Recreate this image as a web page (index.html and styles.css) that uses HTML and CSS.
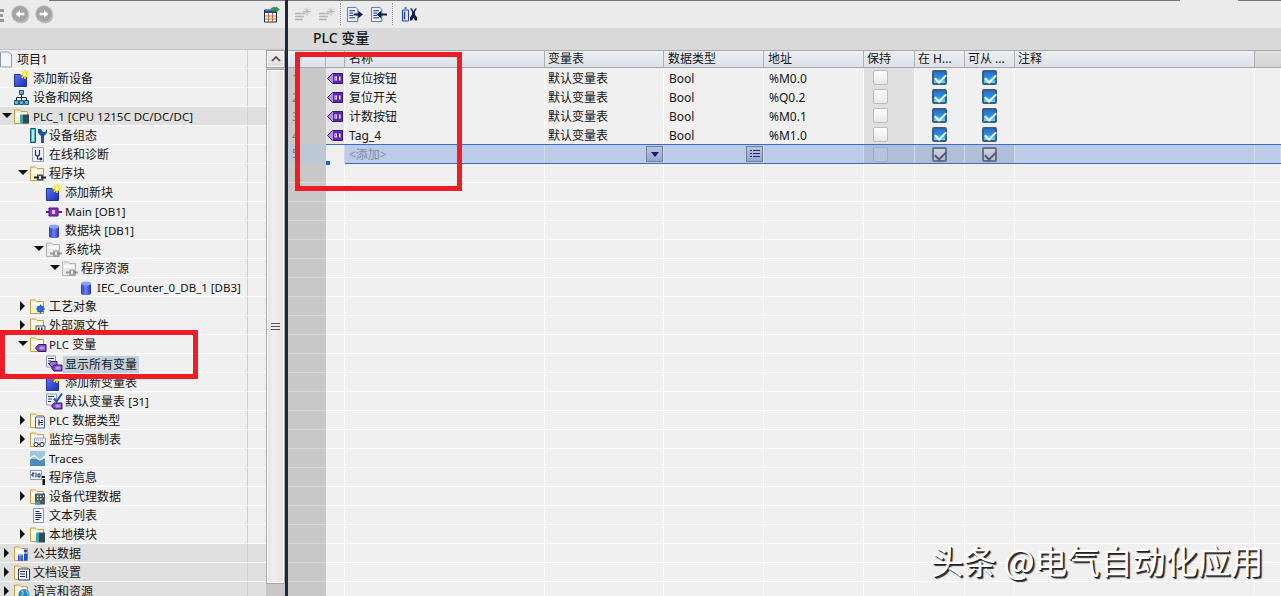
FILE: index.html
```html
<!DOCTYPE html>
<html lang="zh-CN">
<head>
    <meta charset="UTF-8">
    <title>PLC 变量</title>
    <link rel="stylesheet" href="styles.css">
</head>
<body>

<!-- Shared icon parts -->
<svg class="icon-defs" aria-hidden="true">
    <defs>
        <linearGradient id="blue-grad" x1="0" y1="0" x2="1" y2="1">
            <stop offset="0" stop-color="#5a78f0"/>
            <stop offset="1" stop-color="#1c2ab8"/>
        </linearGradient>
        <linearGradient id="db-grad" x1="0" y1="0" x2="1" y2="0">
            <stop offset="0" stop-color="#2a3cc8"/>
            <stop offset="0.5" stop-color="#6a84f4"/>
            <stop offset="1" stop-color="#2430b0"/>
        </linearGradient>
        <g id="folder">
            <path d="M.5 1.500h5l1.500 1.500h6.500v12H.5z" fill="#fdf1c8" stroke="#c6a04c"/>
            <path d="M2 4.500h10v3H2z" fill="#fff"/>
        </g>
        <g id="folder-gray">
            <path d="M.5 1.500h5l1.500 1.500h6.500v12H.5z" fill="#e8e8e8" stroke="#b4b4b4"/>
            <path d="M2 4.500h10v3H2z" fill="#f8f8f8"/>
        </g>
        <g id="add">
            <path d="M.5 4.500h12v12H.5z" fill="url(#blue-grad)" stroke="#2030b0"/>
            <path d="M11 0v9M6.500 4.500h9M7.800 1.300l6.400 6.400M14.200 1.300L7.800 7.700" stroke="#f8ec10" stroke-width="1.500"/>
            <circle cx="11" cy="4.500" r="1.500" fill="#fffbd0"/>
        </g>
        <g id="net">
            <path d="M5.500 1.500h4v4h-4zM.5 11.500h4v4h-4zM5.500 11.500h4v4h-4zM10.500 11.500h4v4h-4z" fill="#5ab4d8" stroke="#205a80"/>
            <path d="M7.500 5.500v6M2.500 11.500v-3h10v3" fill="none" stroke="#1c2a40"/>
        </g>
        <g id="ov-plc">
            <path d="M6 6h3v9H6z" fill="#35a6b4"/>
            <path d="M9 6h6v9H9z" fill="#3a4854"/>
        </g>
        <g id="config">
            <path d="M.5 1.500h5v14h-5z" fill="#3fc0cc" stroke="#1c5a78"/>
            <path d="M2 3h2v11H2z" fill="#b6f0f0"/>
            <path d="M8 2v4l3 3v7h3V9l3-3V2l-2 3h-2l-2-3z" fill="#1c54a8"/>
        </g>
        <g id="diag">
            <path d="M2.500 1.500h11v14h-11z" fill="#f4f6ff" stroke="#98a4d0"/>
            <path d="M5.500 4v4a2 2 0 0 0 4 0V4M7.500 10v3h3" fill="none" stroke="#1c2a60" stroke-width="1.200"/>
            <circle cx="11" cy="13" r="1.400" fill="#1c2a60"/>
        </g>
        <g id="ov-block">
            <path d="M7 9h6v6H7z" fill="#4a525a"/>
            <path d="M4 11h12v2H4z" fill="#20262c"/>
            <path d="M9 10.500h2v3H9z" fill="#e8e8e8"/>
        </g>
        <g id="ob">
            <path d="M3 5h9v8H3z" fill="#8a2cc8" stroke="#4a1080"/>
            <path d="M0 8h3v2H0zM12 8h4v2h-4z" fill="#5a1c98"/>
            <path d="M6 7h3v4H6z" fill="#e8c8f8"/>
        </g>
        <g id="db">
            <path d="M3 4.500v10c0 2 10 2 10 0v-10z" fill="url(#db-grad)"/>
            <ellipse cx="8" cy="4.500" rx="5" ry="2" fill="#8ca4f8"/>
        </g>
        <g id="ov-gear">
            <circle cx="10.500" cy="10.500" r="2.500" fill="none" stroke="#2060c8" stroke-width="2"/>
            <path d="M10.500 6v9M6 10.500h9M7.300 7.300l6.400 6.400M13.700 7.300l-6.400 6.400" stroke="#2060c8"/>
        </g>
        <g id="ov-ext">
            <path d="M6 8.500h9v6H6z" fill="#eef0f8" stroke="#444c60"/>
            <path d="M8 10h1.500v3H8zM11 10h1.500v3H11z" fill="#1c2a50"/>
        </g>
        <g id="ov-tag">
            <path d="M5.500 11.500l3-3.500h7.500v7H8.500z" fill="#7a48c4" stroke="#3c1478"/>
            <path d="M9.500 10h5v3h-5z" fill="#b898e8"/>
        </g>
        <g id="vars">
            <path d="M.5 .5h9v11h-9z" fill="#f4f6ff" stroke="#8a98c8"/>
            <path d="M2 3h6M2 5.500h3M2 8h2" stroke="#2a3a70"/>
            <path d="M3 8.500l2-2.500h6v5H5z" fill="#9a78d8" stroke="#3c1478"/>
            <path d="M5.500 12.500l2.500-3h8v6H8z" fill="#7a48c4" stroke="#3c1478"/>
            <path d="M9.500 11h5v3h-5z" fill="#b898e8"/>
        </g>
        <g id="vartable">
            <path d="M.5 .5h10v11H.5z" fill="#f4f6ff" stroke="#8a98c8"/>
            <path d="M2 3h6M2 5.500h4M2 8h3" stroke="#2a3a70"/>
            <path d="M8 5l2.500 3L16 0" fill="none" stroke="#2050c0" stroke-width="2"/>
            <path d="M5.500 12.500l2.500-3h8v6H8z" fill="#7a48c4" stroke="#3c1478"/>
            <path d="M9.500 11h5v3h-5z" fill="#b898e8"/>
        </g>
        <g id="ov-datatype">
            <path d="M5.500 4.500h9v11h-9z" fill="#f4f6ff" stroke="#4a5ca8"/>
            <path d="M9 7v6M9 10h2M11 8h2M11 10h2M11 12h2" stroke="#1c2a70" stroke-width="1.200"/>
        </g>
        <g id="ov-watch">
            <path d="M4.500 6.500h11v5h-11z" fill="#f4f6ff" stroke="#8a98c8"/>
            <path d="M6 8.500h8" stroke="#6a7ab0" stroke-dasharray="1 1"/>
            <circle cx="6" cy="13" r="2" fill="#fff" stroke="#1c2a50"/>
            <circle cx="12" cy="13" r="2" fill="#fff" stroke="#1c2a50"/>
            <path d="M8 13h2" stroke="#1c2a50"/>
        </g>
        <g id="traces">
            <path d="M0 1h15v15H0z" fill="#4a8cc0"/>
            <path d="M0 1h15v8H0z" fill="#9cc8e4"/>
            <path d="M0 9c3-4 5-4 7-1s5 2 8-2" fill="none" stroke="#fff" stroke-width="1.300"/>
        </g>
        <g id="info">
            <path d="M.5 1.500h11v9h-11z" fill="#f4f6ff" stroke="#8a98c8"/>
            <path d="M2 4h2v1H2v2h2M6 3.500v5M8 5h2v3H8z" fill="none" stroke="#1c2a70"/>
            <path d="M12 7h3v2h-3zM12.500 10H15v6h-2.500z" fill="#111"/>
        </g>
        <g id="ov-proxy">
            <path d="M5 5h10v11H5z" fill="#4a5864"/>
            <path d="M7 7h1.500v1.500H7zM10 7h1.500v1.500H10zM13 7h1v1.500h-1zM7 10h1.500v1.500H7zM10 10h1.500v1.500H10z" fill="#e8e8e8"/>
            <path d="M5 13h5v3H5z" fill="#35a6b4"/>
        </g>
        <g id="textlist">
            <path d="M3.500 1.500h10v14h-10z" fill="#f4f6ff" stroke="#8a98c8"/>
            <path d="M5.500 4.500h4M5.500 6.500h6M5.500 8.500h6M5.500 10.500h6M5.500 12.500h4" stroke="#1c2a70"/>
        </g>
        <g id="ov-local">
            <path d="M6 6h3v10H6z" fill="#35a6b4"/>
            <path d="M9 6h6v10H9z" fill="#3a4854"/>
        </g>
        <g id="ov-common">
            <path d="M4 9.500v5c0 1.500 5 1.500 5 0v-5z" fill="url(#db-grad)"/>
            <ellipse cx="6.500" cy="9.500" rx="2.500" ry="1" fill="#8ca4f8"/>
            <circle cx="11.500" cy="5.500" r="1.800" fill="#1c54a8"/>
            <path d="M10 8h3.500v7H10z" fill="#1c54a8"/>
        </g>
        <g id="ov-docset">
            <path d="M4.500 4.500h11v11h-11z" fill="#f4f6ff" stroke="#2a3a60"/>
            <path d="M6 7h5M6 9.500h5M6 12h5M12.500 6.500v7" stroke="#1c2a50"/>
        </g>
        <g id="ov-globe">
            <circle cx="10" cy="11" r="5.500" fill="#2a80d0"/>
            <path d="M7 8c2-1 3 1 2 2s-2 2 0 4M12 7c1 2 3 3 2 5" fill="none" stroke="#7ed0a8" stroke-width="1.500"/>
        </g>
        <g id="var-tag">
            <path d="M.5 5.500L5.500 .5H15.500v10H5.500z" fill="#b090e4" stroke="#3a1680"/>
            <path d="M6 1h9v9H6z" fill="#6028ac"/>
            <path d="M7.500 3.500H10v4H7.500zM12 3.500h1.500v4H12z" fill="#f4eeff"/>
            <path d="M8.300 4.500h.9v2h-.9z" fill="#6028ac"/>
        </g>
        <g id="tb-star">
            <path d="M0 7h10M0 10h9M0 13h8" stroke="#b4b4b4" stroke-width="1.500"/>
            <path d="M12 1v8M8 5h8M9.200 2.200l5.600 5.600M14.800 2.200L9.200 7.800" stroke="#bcbcbc"/>
        </g>
        <g id="tb-doc">
            <path d="M.5 .5h9l2 2v13H.5z" fill="#e4ecfc" stroke="#5070b8"/>
            <path d="M2.500 4h6M2.500 6.500h4M2.500 9h4M2.500 11.500h6" stroke="#1c2a60"/>
        </g>
    </defs>
</svg>

<div class="left-pane">
    <div class="left-tools">
        <svg class="ico cut-ico" viewBox="0 0 4 17"><path d="M0 3h4v3H0zM0 8h3v3H0zM0 13h4v3H0z" fill="#9a9a9a"/></svg>
        <span class="nav-btn">
            <svg class="ico" viewBox="0 0 16 16"><path d="M3 8l5-4.500V6.500h5v3H8v3z" fill="#fff"/></svg>
        </span>
        <span class="nav-btn">
            <svg class="ico" viewBox="0 0 16 16"><path d="M13 8L8 3.500V6.500H3v3h5v3z" fill="#fff"/></svg>
        </span>
        <svg class="ico table-ico" viewBox="0 0 16 16">
            <path d="M.5 3.500h12v12H.5z" fill="#fff" stroke="#1c2a50"/>
            <path d="M1 4h11v2.500H1z" fill="#2048a0"/>
            <path d="M4.500 6.500v9M8.500 6.500v9M1 9.500h11M1 12.500h11" stroke="#c06a30"/>
            <path d="M6 3c1-2 4-3 6-2V0l4 3-4 3V4c-2-1-4-1-6-1z" fill="#2c9a38"/>
        </svg>
    </div>
    <div class="band"></div>
    <div class="tree-wrap">
        <div class="tree">
            <div class="row root-row"><svg class="ico" viewBox="0 0 16 16"><path d="M2.500 .5h8l3 3v12h-11z" fill="#f4f6ff" stroke="#8a98c8"/></svg><span>项目1</span></div>
            <div class="row lv0"><i class="tw"></i><svg class="ico" viewBox="0 0 16 17"><use href="#add"/></svg><span>添加新设备</span></div>
            <div class="row lv0"><i class="tw"></i><svg class="ico" viewBox="0 0 16 17"><use href="#net"/></svg><span>设备和网络</span></div>
            <div class="row lv0 top-row"><i class="tw open"></i><svg class="ico" viewBox="0 0 16 16"><use href="#folder"/><use href="#ov-plc"/></svg><span class="lat">PLC_1 [CPU 1215C DC/DC/DC]</span></div>
            <div class="row lv1"><i class="tw"></i><svg class="ico" viewBox="0 0 16 17"><use href="#config"/></svg><span>设备组态</span></div>
            <div class="row lv1"><i class="tw"></i><svg class="ico" viewBox="0 0 16 17"><use href="#diag"/></svg><span>在线和诊断</span></div>
            <div class="row lv1"><i class="tw open"></i><svg class="ico" viewBox="0 0 16 16"><use href="#folder"/><use href="#ov-block"/></svg><span>程序块</span></div>
            <div class="row lv2"><i class="tw"></i><svg class="ico" viewBox="0 0 16 17"><use href="#add"/></svg><span>添加新块</span></div>
            <div class="row lv2"><i class="tw"></i><svg class="ico" viewBox="0 0 16 17"><use href="#ob"/></svg><span class="lat">Main [OB1]</span></div>
            <div class="row lv2"><i class="tw"></i><svg class="ico" viewBox="0 0 16 17"><use href="#db"/></svg><span>数据块 <b class="lat">[DB1]</b></span></div>
            <div class="row lv2"><i class="tw open"></i><svg class="ico" viewBox="0 0 16 16"><use href="#folder-gray"/><use href="#ov-block" opacity="0.4"/></svg><span>系统块</span></div>
            <div class="row lv3"><i class="tw open"></i><svg class="ico" viewBox="0 0 16 16"><use href="#folder-gray"/><use href="#ov-block" opacity="0.4"/></svg><span>程序资源</span></div>
            <div class="row lv4"><i class="tw"></i><svg class="ico" viewBox="0 0 16 17"><use href="#db"/></svg><span class="lat">IEC_Counter_0_DB_1 [DB3]</span></div>
            <div class="row lv1"><i class="tw shut"></i><svg class="ico" viewBox="0 0 16 16"><use href="#folder"/><use href="#ov-gear"/></svg><span>工艺对象</span></div>
            <div class="row lv1"><i class="tw shut"></i><svg class="ico" viewBox="0 0 16 16"><use href="#folder"/><use href="#ov-ext"/></svg><span>外部源文件</span></div>
            <div class="row lv1"><i class="tw open"></i><svg class="ico" viewBox="0 0 16 16"><use href="#folder"/><use href="#ov-tag"/></svg><span><b class="lat">PLC</b> 变量</span></div>
            <div class="row lv2"><i class="tw"></i><svg class="ico" viewBox="0 0 16 16"><use href="#vars"/></svg><span class="selected">显示所有变量</span></div>
            <div class="row lv2"><i class="tw"></i><svg class="ico" viewBox="0 0 16 17"><use href="#add"/></svg><span>添加新变量表</span></div>
            <div class="row lv2"><i class="tw"></i><svg class="ico" viewBox="0 0 16 16"><use href="#vartable"/></svg><span>默认变量表 <b class="lat">[31]</b></span></div>
            <div class="row lv1"><i class="tw shut"></i><svg class="ico" viewBox="0 0 16 16"><use href="#folder"/><use href="#ov-datatype"/></svg><span><b class="lat">PLC</b> 数据类型</span></div>
            <div class="row lv1"><i class="tw shut"></i><svg class="ico" viewBox="0 0 16 16"><use href="#folder"/><use href="#ov-watch"/></svg><span>监控与强制表</span></div>
            <div class="row lv1"><i class="tw"></i><svg class="ico" viewBox="0 0 16 17"><use href="#traces"/></svg><span class="lat">Traces</span></div>
            <div class="row lv1"><i class="tw"></i><svg class="ico" viewBox="0 0 16 17"><use href="#info"/></svg><span>程序信息</span></div>
            <div class="row lv1"><i class="tw shut"></i><svg class="ico" viewBox="0 0 16 16"><use href="#folder"/><use href="#ov-proxy"/></svg><span>设备代理数据</span></div>
            <div class="row lv1"><i class="tw"></i><svg class="ico" viewBox="0 0 16 17"><use href="#textlist"/></svg><span>文本列表</span></div>
            <div class="row lv1"><i class="tw shut"></i><svg class="ico" viewBox="0 0 16 16"><use href="#folder"/><use href="#ov-local"/></svg><span>本地模块</span></div>
            <div class="row lv0 top-row"><i class="tw shut"></i><svg class="ico" viewBox="0 0 16 16"><use href="#folder"/><use href="#ov-common"/></svg><span>公共数据</span></div>
            <div class="row lv0 top-row"><i class="tw shut"></i><svg class="ico" viewBox="0 0 16 16"><use href="#folder"/><use href="#ov-docset"/></svg><span>文档设置</span></div>
            <div class="row lv0 top-row"><i class="tw shut"></i><svg class="ico" viewBox="0 0 16 16"><use href="#folder"/><use href="#ov-globe"/></svg><span>语言和资源</span></div>
        </div>
        <div class="scroll">
            <div class="scroll-btn"><svg viewBox="0 0 10 6" width="10" height="6"><path d="M1 5l4-4 4 4" fill="none" stroke="#444" stroke-width="1.600"/></svg></div>
            <div class="scroll-thumb"><span class="grip"></span></div>
        </div>
    </div>
</div>

<div class="divider"></div>

<div class="right-pane">
    <div class="tools">
        <svg class="ico" viewBox="0 0 16 16"><use href="#tb-star"/></svg>
        <svg class="ico" viewBox="0 0 16 16"><use href="#tb-star"/></svg>
        <span class="tool-sep"></span>
        <svg class="ico" viewBox="0 0 17 16"><use href="#tb-doc"/><path d="M7 7h5V4l5 4-5 4V9H7z" fill="#0c1c50"/></svg>
        <svg class="ico" viewBox="0 0 17 16"><use href="#tb-doc"/><path d="M17 7h-6V4L6 8l5 4V9h6z" fill="#0c1c50"/></svg>
        <span class="tool-sep"></span>
        <svg class="ico tool-last" viewBox="0 0 16 16">
            <path d="M1.500 3.500h6v11h-6z" fill="#e4ecfc" stroke="#2040c0"/>
            <path d="M3.500 1.500h2M3.500 5v8" stroke="#2040c0" stroke-width="1.500"/>
            <path d="M9 2l2 3v3l-2 3v3h2l1.500-3 1.500 3h2v-3l-2-3V5l2-3h-2l-1.500 3L11 2z" fill="#101c40"/>
        </svg>
    </div>
    <div class="band title-band">PLC 变量</div>

    <div class="table">
        <div class="grid head">
            <div></div>
            <div></div>
            <div class="wide">名称</div>
            <div>变量表</div>
            <div class="wide">数据类型</div>
            <div class="wide">地址</div>
            <div>保持</div>
            <div>在 H...</div>
            <div>可从 ...</div>
            <div>注释</div>
            <div class="head-rest"></div>
        </div>

        <div class="grid data">
            <div class="num">1</div>
            <div class="tag"><svg viewBox="0 0 16 11" width="16" height="11"><use href="#var-tag"/></svg></div>
            <div class="name">复位按钮</div>
            <div>默认变量表</div>
            <div class="pad">Bool</div>
            <div class="pad">%M0.0</div>
            <div class="retain"><span class="box"></span></div>
            <div class="check"><span class="box on"></span></div>
            <div class="check"><span class="box on"></span></div>
            <div></div>
            <div></div>
        </div>
        <div class="grid data">
            <div class="num">2</div>
            <div class="tag"><svg viewBox="0 0 16 11" width="16" height="11"><use href="#var-tag"/></svg></div>
            <div class="name">复位开关</div>
            <div>默认变量表</div>
            <div class="pad">Bool</div>
            <div class="pad">%Q0.2</div>
            <div class="retain"><span class="box"></span></div>
            <div class="check"><span class="box on"></span></div>
            <div class="check"><span class="box on"></span></div>
            <div></div>
            <div></div>
        </div>
        <div class="grid data">
            <div class="num">3</div>
            <div class="tag"><svg viewBox="0 0 16 11" width="16" height="11"><use href="#var-tag"/></svg></div>
            <div class="name">计数按钮</div>
            <div>默认变量表</div>
            <div class="pad">Bool</div>
            <div class="pad">%M0.1</div>
            <div class="retain"><span class="box"></span></div>
            <div class="check"><span class="box on"></span></div>
            <div class="check"><span class="box on"></span></div>
            <div></div>
            <div></div>
        </div>
        <div class="grid data">
            <div class="num">4</div>
            <div class="tag"><svg viewBox="0 0 16 11" width="16" height="11"><use href="#var-tag"/></svg></div>
            <div class="name">Tag_4</div>
            <div>默认变量表</div>
            <div class="pad">Bool</div>
            <div class="pad">%M1.0</div>
            <div class="retain"><span class="box"></span></div>
            <div class="check"><span class="box on"></span></div>
            <div class="check"><span class="box on"></span></div>
            <div></div>
            <div></div>
        </div>

        <!-- New row, currently focused -->
        <div class="grid add-row">
            <div class="num">5</div>
            <div class="add-tag"><i class="handle"></i></div>
            <div class="name add-text">&lt;添加&gt;</div>
            <div class="with-btn"><span class="cell-btn"><i class="arrow-down"></i></span></div>
            <div class="with-btn"><span class="cell-btn"><svg viewBox="0 0 10 10" width="10" height="10"><path d="M0 1h2v1H0zM3 1h7v1H3zM0 4h2v1H0zM3 4h7v1H3zM0 7h2v1H0zM3 7h7v1H3z" fill="#1c2a90"/></svg></span></div>
            <div></div>
            <div class="dim retain"><span class="box"></span></div>
            <div class="dim"><span class="box off"></span></div>
            <div class="dim"><span class="box off"></span></div>
            <div></div>
            <div></div>
        </div>

        <div class="grid filler">
            <div class="num"></div>
            <div></div><div></div><div></div><div></div><div></div>
            <div></div><div></div><div></div><div></div><div></div>
        </div>
    </div>
</div>

<!-- Annotations drawn over the screenshot -->
<div class="mark mark-table"></div>
<div class="mark mark-tree"></div>
<div class="watermark">头条 @电气自动化应用</div>

</body>
</html>
```

FILE: styles.css
```css
* {
    box-sizing: border-box;
}

body {
    margin: 0;
    width: 1281px;
    height: 596px;
    overflow: hidden;
    position: relative;
    display: flex;
    font-family: "Noto Sans", "Noto Sans CJK SC", sans-serif;
    font-size: 12px;
    line-height: 18px;
    color: #141414;
    background-color: #f0f0f0;
}

.icon-defs {
    position: absolute;
    width: 0;
    height: 0;
}

.ico {
    width: 16px;
    height: 17px;
    flex-shrink: 0;
    overflow: visible;
}

.lat {
    font-size: 11.5px;
    font-weight: normal;
}

/* Left pane */
.left-pane {
    width: 285px;
    flex-shrink: 0;
    display: flex;
    flex-direction: column;
}

.left-tools {
    height: 28px;
    display: flex;
    align-items: center;
    gap: 8px;
    background: linear-gradient(#777, #777) no-repeat 49px 0 / 100% 1px, #ebebeb;
}

.cut-ico {
    width: 4px;
    overflow: hidden;
}

.nav-btn {
    width: 16px;
    height: 16px;
    border-radius: 50%;
    background-color: #a4a4a4;
    box-shadow: 0 0 0 1px #cfcfcf, 1px 1px 1px #888;
    display: flex;
    align-items: center;
    justify-content: center;
}

.nav-btn .ico {
    width: 14px;
    height: 14px;
}

.table-ico {
    margin-left: auto;
    margin-right: 5px;
}

.band {
    height: 22px;
    background-color: #d9d9d9;
    border-bottom: 1px solid #c4c4c4;
}

.tree-wrap {
    flex: 1;
    display: flex;
    min-height: 0;
}

.tree {
    width: 266px;
    flex-shrink: 0;
}

.row {
    height: 19px;
    display: flex;
    align-items: center;
    border-bottom: 1px solid #fff;
    background: linear-gradient(#cfcfcf, #cfcfcf) no-repeat 247px 0 / 1px 100%, #f0f0f0;
    white-space: nowrap;
}

.row .ico {
    margin-right: 3px;
}

.row > span {
    margin-top: 2px;
}

.top-row {
    background: linear-gradient(#cfcfcf, #cfcfcf) no-repeat 247px 0 / 1px 100%, #e0e0e0;
}

.root-row .ico {
    margin-left: -2px;
    margin-right: 3px;
}

.lv1 { padding-left: 16px; }
.lv2 { padding-left: 32px; }
.lv3 { padding-left: 48px; }
.lv4 { padding-left: 64px; }

/* Tree twisties */
.tw {
    width: 14px;
    height: 10px;
    flex-shrink: 0;
    display: block;
}

.tw.open::before {
    content: "";
    display: block;
    margin: 2px 0 0 2px;
    border-left: 5px solid transparent;
    border-right: 5px solid transparent;
    border-top: 5px solid #111;
    width: 0;
}

.tw.shut::before {
    content: "";
    display: block;
    margin: 0 0 0 4px;
    border-top: 5px solid transparent;
    border-bottom: 5px solid transparent;
    border-left: 5px solid #111;
    width: 0;
}

.row .selected {
    background-color: #c2d0dc;
    padding: 0 2px;
    margin-left: -2px;
    line-height: 17px;
}

/* Scrollbar */
.scroll {
    width: 19px;
    flex-shrink: 0;
    background-color: #c8c8c8;
    padding-bottom: 12px;
    display: flex;
    flex-direction: column;
}

.scroll-btn {
    height: 18px;
    margin-bottom: 1px;
    background: linear-gradient(#f0f0f0, #dcdcdc);
    border: 1px solid #a0a0a0;
    outline: 1px solid #fff;
    outline-offset: -2px;
    display: flex;
    align-items: center;
    justify-content: center;
}

.scroll-thumb {
    flex: 1;
    background: linear-gradient(90deg, #e2e2e2, #f0f0f0 40%, #e4e4e4);
    border: 1px solid #a8a8a8;
    outline: 1px solid #fff;
    outline-offset: -2px;
    display: flex;
    align-items: center;
    justify-content: center;
}

.grip {
    width: 9px;
    height: 7px;
    border-top: 1px solid #555;
    border-bottom: 1px solid #555;
    background: linear-gradient(#555, #555) no-repeat 0 center / 100% 1px;
}

.divider {
    width: 3px;
    flex-shrink: 0;
    background-color: #1c2838;
}

/* Right pane */
.right-pane {
    flex: 1;
    min-width: 0;
    display: flex;
    flex-direction: column;
}

.tools {
    height: 28px;
    padding-left: 7px;
    display: flex;
    align-items: center;
    gap: 8px;
    background:
        linear-gradient(#777, #777) no-repeat 0 0 / 892px 1px,
        linear-gradient(#777, #777) no-repeat 950px 0 / 100% 1px,
        #ebebeb;
}

.tool-sep {
    height: 22px;
    width: 0;
    border-left: 1px dotted #999;
    margin: 0 -2px 0 -3px;
}

.tool-last {
    margin-left: 2px;
}

.title-band {
    padding-left: 25px;
    font-size: 14px;
    line-height: 20px;
    font-weight: 500;
    border-bottom: none;
}

.table {
    flex: 1;
    display: flex;
    flex-direction: column;
    min-height: 0;
}

.grid {
    display: grid;
    grid-template-columns: 38px 19px 200px 119px 100px 100px 51px 50px 50px 240px 1fr;
}

.head {
    height: 18px;
    border-top: 1px solid #a8a8a8;
    border-bottom: 1px solid #a8a8a8;
    background: linear-gradient(#edf0f4, #dce2ea);
}

.head > div {
    padding-left: 3px;
    border-right: 1px solid #b0b0b0;
    line-height: 16px;
    white-space: nowrap;
    overflow: hidden;
}

.head .wide {
    padding-left: 4px;
}

.head .head-rest {
    border-right: none;
    background: linear-gradient(#dfdfdf, #d4d4d4);
}

.data {
    height: 19px;
    background-color: #f0f0f0;
}

.data > div {
    border-right: 1px solid #fff;
    border-bottom: 1px solid #fff;
    padding-left: 3px;
    padding-top: 2px;
    line-height: 17px;
    white-space: nowrap;
}

.data .pad {
    padding-left: 5px;
}

.data .name {
    padding-left: 4px;
}

.data .num,
.add-row .num {
    background-color: #c8c8c8;
    border-right: none;
    border-bottom: 1px solid #d4d4d4;
    padding-left: 4px;
    color: #777;
}

.data .tag {
    padding: 5px 0 0 1px;
    background-color: #e6e6e6;
}

.data .tag svg {
    display: block;
}

.retain,
.check,
.dim {
    display: flex;
    justify-content: center;
    align-items: center;
}

.data .retain,
.data .check {
    padding: 0;
}

.data .retain {
    background-color: #e0e0e0;
}

.retain {
    justify-content: flex-start;
}

.data .retain,
.add-row .retain {
    padding-left: 9px;
}

/* Checkboxes */
.box {
    width: 15px;
    height: 15px;
    border-radius: 2px;
    border: 1px solid #bcbcbc;
    background: linear-gradient(#fff, #e8e8e8);
    position: relative;
}

.box.on {
    border: 2px solid #3e5c88;
    background: linear-gradient(#2470c8, #2a8ee0 50%, #68e4f4);
}

.box.off {
    border: 2px solid #66708a;
    background: linear-gradient(#c8d0e0, #b4bed4);
}

.box.on::after,
.box.off::after {
    content: "";
    position: absolute;
    left: 3px;
    top: 0;
    width: 5px;
    height: 9px;
    border-right: 2px solid #fff;
    border-bottom: 2px solid #fff;
    transform: rotate(45deg);
}

.box.off::after {
    border-color: #556;
}

.dim .box:not(.off) {
    border-color: #a0aac0;
    background: #b8c4dc;
}

/* Row with the add prompt */
.add-row {
    height: 20px;
    background-color: #bccbe6;
    border-top: 1px solid #3a6cc8;
    border-bottom: 1px solid #3a6cc8;
    position: relative;
}

.add-row > div {
    border-right: 1px solid #d0daee;
    white-space: nowrap;
}

.add-row .num {
    border-bottom: none;
    background-color: #bcc8d4;
    margin: -1px 0;
    padding-top: 1px;
}

.add-row .add-tag {
    background-color: #f0f0f0;
    position: relative;
    margin-bottom: -1px;
}

.handle {
    position: absolute;
    left: 0;
    bottom: -1px;
    width: 4px;
    height: 4px;
    background-color: #2a5cd8;
}

.add-row .name {
    padding-left: 4px;
    padding-top: 1px;
    line-height: 17px;
}

.add-text {
    color: #7f8ba8;
}

.with-btn {
    display: flex;
    justify-content: flex-end;
    align-items: center;
}

.cell-btn {
    width: 17px;
    height: 16px;
    background: linear-gradient(#b8c4e0, #9aa8c8);
    border: 1px solid #708098;
    display: flex;
    align-items: center;
    justify-content: center;
}

.arrow-down {
    width: 0;
    border-left: 4px solid transparent;
    border-right: 4px solid transparent;
    border-top: 5px solid #101c80;
}

.dim {
    background-color: #b0bed8;
}

.filler {
    flex: 1;
    min-height: 0;
}

.filler > div {
    border-right: 1px solid #fff;
    background: repeating-linear-gradient(#f0f0f0 0, #f0f0f0 18px, #fff 18px, #fff 19px);
}

.filler .num {
    border-right: none;
    background: repeating-linear-gradient(#c8c8c8 0, #c8c8c8 18px, #d6d6d6 18px, #d6d6d6 19px);
}

/* Annotations */
.mark {
    position: absolute;
    border: 5px solid #ee1c25;
}

.mark-table {
    left: 295px;
    top: 52px;
    width: 167px;
    height: 139px;
}

.mark-tree {
    left: 0;
    top: 330px;
    width: 198px;
    height: 49px;
}

.watermark {
    position: absolute;
    left: 931px;
    top: 536px;
    font-family: "Noto Sans CJK SC", sans-serif;
    font-size: 32.7px;
    line-height: 48px;
    white-space: nowrap;
    color: #fff;
    text-shadow: 1px 1px 0 #222, 2px 2px 1px #333;
}
```
